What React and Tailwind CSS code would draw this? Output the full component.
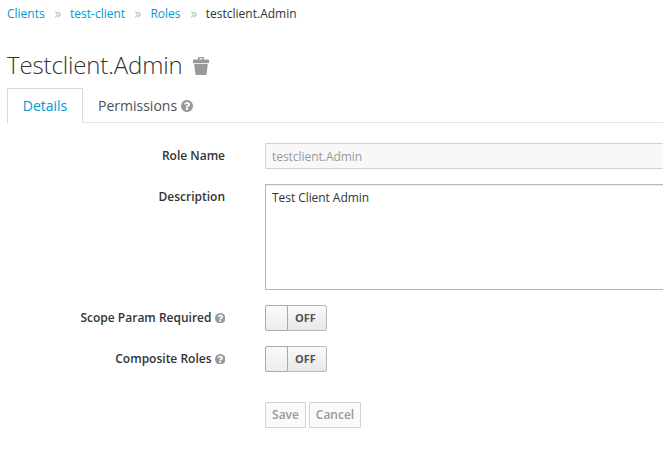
function Trash() {
  return (
    <svg className="ml-[10px] mt-[2px] h-[18px] w-4 shrink-0" viewBox="0 0 16 18" fill="#999999">
      <path fillRule="evenodd" d="M0 3.5Q0 2.500 1 2.500H5V1Q5 0 6 0H10Q11 0 11 1V2.500H15Q16 2.500 16 3.500V6H0ZM6.500 1.300V2.500H9.500V1.300Z" />
      <path d="M1.200 6.700H14.800L13.600 17Q13.500 18 12.500 18H3.500Q2.500 18 2.400 17Z" />
    </svg>
  );
}

function Help({ className }) {
  return (
    <svg className={className} viewBox="0 0 1536 1536" fill="#999999">
      <path d="M896 1248v-192q0-14-9-23t-23-9H672q-14 0-23 9t-9 23v192q0 14 9 23t23 9h192q14 0 23-9t9-23zm256-672q0-88-55.500-163T958 297t-170-41q-243 0-371 213-15 24 8 42l132 100q7 6 19 6 16 0 25-12 53-68 86-92 34-24 86-24 48 0 85.500 26t37.500 59q0 38-20 61t-68 45q-63 28-115.500 86.500T640 892v36q0 14 9 23t23 9h192q14 0 23-9t9-23q0-19 21.500-49.500T972 829q32-18 49-28.500t46-35 44.500-48 28-60.500 12.500-81zm384 192q0 209-103 385.500T1153.500 1433 768 1536t-385.500-103T103 1153.500 0 768t103-385.500T382.500 103 768 0t385.500 103T1433 382.500 1536 768z" />
    </svg>
  );
}

function Separator() {
  return (
    <svg className="mr-[9.300px] ml-[10px] mt-[2px] h-[7px] w-[6px]" viewBox="0 0 6 7" fill="none" stroke="#8f8f8f" strokeWidth="0.9">
      <path d="M0.300 0.700L2.900 3.500L0.300 6.300M3 0.700L5.600 3.500L3 6.300" />
    </svg>
  );
}

function Label({ children, help }) {
  return (
    <label className="flex h-[26px] w-[225px] shrink-0 items-center justify-end font-semibold text-[#333333]">
      <span>{children}</span>
      {help && <Help className="ml-[3px] h-[10.5px] w-[10.5px]" />}
    </label>
  );
}

function Toggle() {
  return (
    <button className="ml-10 flex h-[26px] w-[62px] rounded-[2px] border border-[#b7b7b7] bg-gradient-to-b from-[#fafafa] to-[#e8e8e8]">
      <span className="-my-px -ml-px h-[26px] w-[23px] rounded-[2px] border border-[#aaaaaa] bg-gradient-to-b from-[#fafafa] to-[#ededed]" />
      <span className="flex-1 pr-[3px] text-center text-[11px] leading-[24px] font-bold text-[#4d5258]">OFF</span>
    </button>
  );
}

export default function App() {
  return (
    <main className="h-[470px] w-[663px] overflow-hidden bg-white font-['Open_Sans',sans-serif] text-[12px] leading-5 text-[#333333]">
      <nav className="flex h-5 items-center pt-[7px] pl-[7px]">
        <a className="text-[#0099d3]">Clients</a>
        <Separator />
        <a className="text-[#0099d3]">test-client</a>
        <Separator />
        <a className="text-[#0099d3]">Roles</a>
        <Separator />
        <span>testclient.Admin</span>
      </nav>
      <h1 className="mt-[30px] flex h-[30px] items-center pl-[7px] text-[24px] leading-[30px] font-light">
        <span className="tracking-[-0.14px]">Testclient.Admin</span>
        <Trash />
      </h1>
      <div className="mt-[8px] ml-[7px] flex h-[35px] border-b border-[#e5e5e5] text-[14px] leading-[33px]">
        <div className="h-[35px] w-[76px] border border-b-0 border-[#d9d9d9] bg-white text-center text-[#0099d3]">Details</div>
        <div className="flex items-center pl-[15px] text-[#4d5258]">
          Permissions
          <Help className="mt-px ml-1 h-3 w-3" />
        </div>
      </div>
      <form className="pt-5">
        <div className="flex">
          <Label>Role Name</Label>
          <input disabled value="testclient.Admin" className="ml-10 h-[26px] min-w-0 flex-1 rounded-l-[1px] border border-r-0 border-[#d0d0d0] bg-[#f8f8f8] px-[6px] tracking-[-0.04px] text-[#999999]" />
        </div>
        <div className="mt-[15px] flex">
          <Label>Description</Label>
          <textarea readOnly value="Test Client Admin" className="ml-10 h-[106px] min-w-0 flex-1 resize-none rounded-l-[1px] border border-r-0 border-[#b7b7b7] px-[6px] py-[3px] tracking-[-0.06px] shadow-[inset_0_1px_1px_rgba(0,0,0,0.075)]" />
        </div>
        <div className="mt-[15px] flex">
          <Label help>Scope Param Required</Label>
          <Toggle />
        </div>
        <div className="mt-[15px] flex">
          <Label help>Composite Roles</Label>
          <Toggle />
        </div>
        <div className="mt-[30px] ml-[265px] flex gap-[3px] font-semibold text-[#999999]">
          <button disabled className="h-[26px] w-[41px] rounded-[1px] border border-[#d1d1d1] bg-[#fafafa]">Save</button>
          <button disabled className="h-[26px] w-[52px] rounded-[1px] border border-[#d1d1d1] bg-[#fafafa]">Cancel</button>
        </div>
      </form>
    </main>
  );
}
